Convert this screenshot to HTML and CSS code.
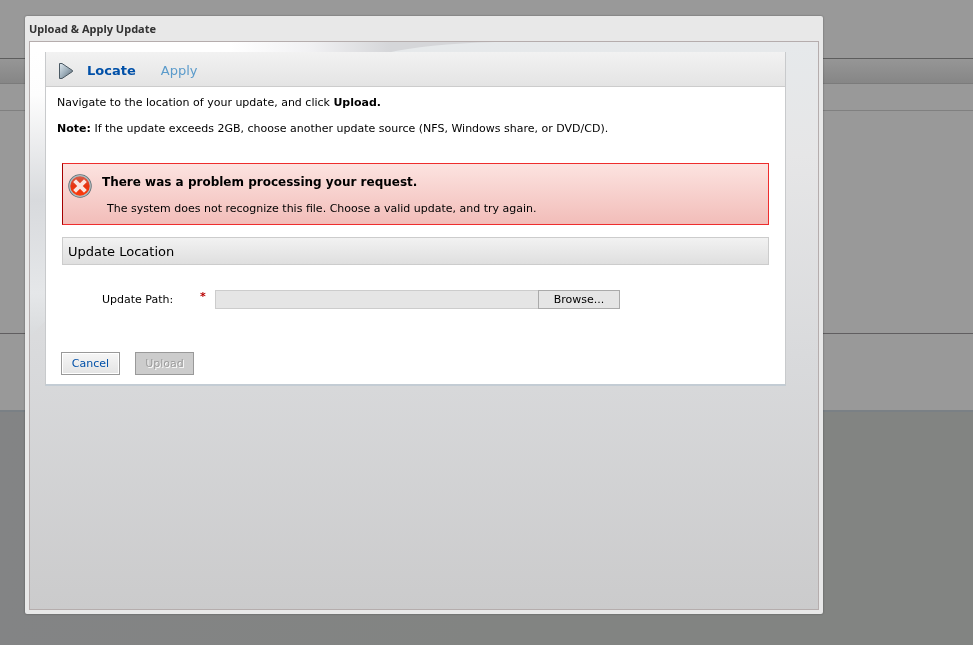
FILE: index.html
```html
<!DOCTYPE html>
<html lang="en">
<head>
<meta charset="utf-8">
<title>Upload &amp; Apply Update</title>
<link rel="stylesheet" href="styles.css">
</head>
<body>
<div class="page" aria-hidden="true">
  <div class="page-top"></div>
  <div class="page-bar"></div>
  <div class="page-sub"></div>
  <div class="page-content"></div>
  <div class="page-actions"></div>
  <div class="page-footer"></div>
</div>
<div class="overlay">
  <section class="dialog" role="dialog" aria-labelledby="dialog-title">
    <h1 class="dialog-title" id="dialog-title">Upload &amp; Apply Update</h1>
    <div class="dialog-body">
      <svg class="backdrop" viewBox="0 0 788 567" preserveAspectRatio="none" aria-hidden="true">
        <defs>
          <linearGradient id="base" x1="0" y1="0" x2="0" y2="1">
            <stop offset="0" stop-color="#e6e9eb"/>
            <stop offset=".2" stop-color="#e6e6e7"/>
            <stop offset=".55" stop-color="#d9dadc"/>
            <stop offset="1" stop-color="#cbcbcc"/>
          </linearGradient>
          <linearGradient id="sweep" gradientUnits="userSpaceOnUse" x1="200" y1="0" x2="360" y2="0">
            <stop offset="0" stop-color="#fff"/>
            <stop offset=".5" stop-color="#f1f1f3"/>
            <stop offset="1" stop-color="#d5d6d9"/>
          </linearGradient>
          <linearGradient id="side" x1="0" y1="0" x2="0" y2="1">
            <stop offset="0" stop-color="#fff"/>
            <stop offset=".15" stop-color="#fdfdfd"/>
            <stop offset=".52" stop-color="#d8dadd"/>
            <stop offset=".85" stop-color="#e5e7e9"/>
            <stop offset="1" stop-color="#d9dbdd"/>
          </linearGradient>
        </defs>
        <rect width="788" height="567" fill="url(#base)"/>
        <path d="M0 0H465Q395 2 357 11L180 60H0Z" fill="url(#sweep)"/>
        <path d="M0 10H60V230Q30 266 0 294Z" fill="url(#side)"/>
      </svg>
      <div class="panel">
        <ol class="steps">
          <li class="step current" aria-current="step">
            <svg class="arrow" viewBox="0 0 17 18" aria-hidden="true">
              <defs><linearGradient id="arrow-fill" x1="0" y1="0" x2="1" y2="1"><stop offset="0" stop-color="#dfe9f0"/><stop offset=".5" stop-color="#9fb0bc"/><stop offset="1" stop-color="#56636e"/></linearGradient></defs>
              <path d="M1.5 1.5H4L14.5 8.5V9.5L4 16.5H1.5Z" fill="url(#arrow-fill)" stroke="#4b5963" stroke-linejoin="round"/>
            </svg>
            Locate
          </li>
          <li class="step">Apply</li>
        </ol>
        <form class="content">
          <p class="text">Navigate to the location of your update, and click <b>Upload.</b></p>
          <p class="text"><b>Note:</b> If the update exceeds 2GB, choose another update source (NFS, Windows share, or DVD/CD).</p>
          <div class="alert" role="alert">
            <svg class="error-icon" viewBox="0 0 24 24" aria-hidden="true">
              <defs><linearGradient id="error-fill" x1="0" y1="0" x2="0" y2="1"><stop offset="0" stop-color="#d4604e"/><stop offset=".5" stop-color="#e8330f"/><stop offset="1" stop-color="#ff3c0c"/></linearGradient></defs>
              <circle cx="12" cy="12" r="11.7" fill="#596b73"/>
              <circle cx="12" cy="12" r="10.3" fill="url(#error-fill)" stroke="#b0bcbf" stroke-width="1.2"/>
              <path d="M6.6 6.6L17.4 17.4M17.4 6.6L6.6 17.4" stroke="#fbe3de" stroke-width="4"/>
            </svg>
            <div class="alert-text">
              <h2 class="alert-title">There was a problem processing your request.</h2>
              <p class="alert-detail">The system does not recognize this file. Choose a valid update, and try again.</p>
            </div>
          </div>
          <h2 class="section-title">Update Location</h2>
          <div class="field">
            <label class="label" for="update-path">Update Path:</label>
            <span class="required">*</span>
            <input class="path" id="update-path" type="text" readonly>
            <button class="browse" type="button">Browse...</button>
          </div>
          <div class="actions">
            <button class="button" type="button">Cancel</button>
            <button class="button" type="submit" disabled>Upload</button>
          </div>
        </form>
      </div>
    </div>
  </section>
</div>
</body>
</html>
```

FILE: styles.css
```css
* { box-sizing: border-box; }

body {
  margin: 0;
  font: 11px/16px Verdana, "DejaVu Sans", sans-serif;
  color: #000;
  background: #828482;
}

h1, h2, p, ol { margin: 0; padding: 0; }
button, input { font: inherit; }

.page {
  display: flex;
  flex-direction: column;
  min-height: 100vh;
  background: #999;
}
.page-top { height: 59px; border-bottom: 1px solid #5d5d5d; }
.page-bar { height: 25px; border-bottom: 1px solid #7b7b7b; background: linear-gradient(#969696, #868686); }
.page-sub { height: 27px; border-bottom: 1px solid #808080; }
.page-content { height: 223px; border-bottom: 1px solid #605e60; }
.page-actions { height: 76px; }
.page-footer { flex: 1; border-top: 2px solid #7a8085; background: linear-gradient(90deg, #838485, #828482 50%); }

.overlay {
  position: fixed;
  inset: 0;
  display: flex;
  padding: 16px 150px 31px 25px;
}
.dialog {
  flex: 1;
  display: flex;
  flex-direction: column;
  padding: 0 4px 4px;
  border-radius: 2px;
  background: #e8e8e8;
  box-shadow: 0 0 2px rgba(0, 0, 0, .4);
}
.dialog-title {
  padding: 5px 0 4px;
  font: bold 11px/16px Tahoma, "Noto Sans", sans-serif;
  color: #333;
}
.dialog-body {
  position: relative;
  flex: 1;
  padding: 10px 32px 0 15px;
  border: 1px solid #b5adad;
}
.backdrop {
  position: absolute;
  inset: 0;
  width: 100%;
  height: 100%;
}

.panel {
  position: relative;
  border: solid #c8cacc;
  border-width: 0 1px 2px;
  border-bottom-color: #c3ccd4;
  background: #fff;
}
.steps {
  display: flex;
  align-items: center;
  gap: 25px;
  height: 35px;
  padding: 3px 12px 0;
  list-style: none;
  border-bottom: 1px solid #ccc;
  background: linear-gradient(#f2f2f2, #e4e4e4);
  font-size: 13px;
}
.step { display: flex; align-items: center; color: #5b9bcb; }
.current { gap: 12px; font-weight: bold; color: #0050a8; }
.arrow { width: 17px; height: 18px; }

.content { padding: 8px 15px 9px; }
.text { margin: 0 -4px 10px; }

.alert {
  display: flex;
  gap: 10px;
  min-height: 62px;
  margin: 26px 1px 12px;
  padding: 10px 5px 7px;
  border: 1px solid #ee2d2d;
  border-left-color: #a40000;
  background: linear-gradient(#fce3e0, #f2bdb9);
}
.error-icon { width: 24px; height: 24px; }
.alert-title { font-size: 12px; line-height: 16px; }
.alert-detail { padding: 11px 5px 0; }

.section-title {
  margin: 0 1px;
  padding: 6px 5px 4px;
  border: 1px solid #ccc;
  background: linear-gradient(#f2f2f2, #dfdfdf);
  font-size: 13px;
  font-weight: normal;
  line-height: 16px;
}

.field {
  display: flex;
  align-items: center;
  padding: 25px 0 43px 41px;
}
.label { width: 98px; }
.required {
  align-self: flex-start;
  width: 15px;
  color: #b80000;
  font-weight: bold;
  line-height: 13px;
}
.path {
  width: 323px;
  height: 19px;
  border: 1px solid #ccc;
  border-right: 0;
  background: #e5e5e5;
}
.browse {
  width: 82px;
  height: 19px;
  padding: 0;
  border: 1px solid #aaa;
  background: #e5e5e5;
  color: #000;
}

.actions { display: flex; gap: 15px; }
.button {
  width: 59px;
  height: 23px;
  padding: 0;
  border: 1px solid #999;
  background: linear-gradient(#f6f6f6, #e4e4e4);
  box-shadow: inset 0 0 0 1px #fff;
  color: #0050a8;
}
.button:disabled {
  background: #ccc;
  box-shadow: none;
  color: #9b9b9b;
  text-shadow: 1px 1px #fff;
}
```
